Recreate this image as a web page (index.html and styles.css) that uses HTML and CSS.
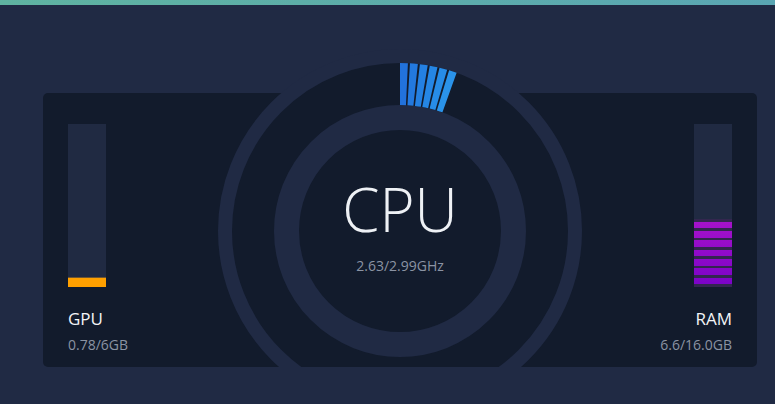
FILE: index.html
```html
<html>
  <head>
    <link rel="stylesheet" href="styles.css">
    <title>System Monitor</title>
  </head>
  <body>
    <div id="topBar"></div>
    <div id="panel">
      <div id="card">
        <div class="meter">
          <div class="meterBar">
            <div class="meterFill gpuFill" style="height: 9px"></div>
          </div>
          <div class="meterLabel">GPU</div>
          <div class="meterValue">0.78/6GB</div>
        </div>
        <div id="gaugeWrap">
          <div id="gauge">
            <svg id="ticks" width="364" height="364" viewBox="0 0 364 364">
              <path fill="#2272dc" d="M182 14 A168 168 0 0 1 189.91 14.19 L187.94 56.14 A126 126 0 0 0 182 56 Z"/>
              <path fill="#2379df" d="M191.96 14.3 A168 168 0 0 1 199.85 14.95 L195.39 56.71 A126 126 0 0 0 189.47 56.22 Z"/>
              <path fill="#2480e2" d="M201.89 15.18 A168 168 0 0 1 209.73 16.3 L202.8 57.73 A126 126 0 0 0 196.92 56.89 Z"/>
              <path fill="#2586e5" d="M211.75 16.65 A168 168 0 0 1 219.51 18.24 L210.13 59.18 A126 126 0 0 0 204.31 57.99 Z"/>
              <path fill="#278ce7" d="M221.5 18.71 A168 168 0 0 1 229.15 20.75 L217.36 61.06 A126 126 0 0 0 211.63 59.53 Z"/>
              <path fill="#2a93ea" d="M231.12 21.34 A168 168 0 0 1 238.63 23.83 L224.47 63.37 A126 126 0 0 0 218.84 61.51 Z"/>
            </svg>
            <div id="core">
              <div id="cpuTitle">CPU</div>
              <div id="cpuValue">2.63/2.99GHz</div>
            </div>
          </div>
        </div>
        <div class="meter right">
          <div class="meterBar">
            <div class="meterFill ramFill" style="height: 68px"></div>
          </div>
          <div class="meterLabel">RAM</div>
          <div class="meterValue">6.6/16.0GB</div>
        </div>
      </div>
    </div>
  </body>
</html>
```

FILE: styles.css
```css
* {
  margin: 0;
  padding: 0;
  box-sizing: border-box;
}
body {
  background: #202a44;
  font-family: "Open Sans", "Noto Sans", sans-serif;
  overflow: hidden;
}
#topBar {
  height: 5px;
  background: linear-gradient(to right, #5fb3a1, #5aa6b3);
}
#panel {
  height: 399px;
  background: #202a44;
  border-radius: 4px 0 0 0;
  padding: 88px 0 0 43px;
}
#card {
  width: 714px;
  height: 274px;
  background: #121b2c;
  border-radius: 5px;
  padding: 31px 25px 0 25px;
  display: flex;
  align-items: flex-start;
}
.meter {
  flex: 1;
  display: flex;
  flex-direction: column;
  align-items: flex-start;
}
.meter.right {
  align-items: flex-end;
}
.meterBar {
  width: 38px;
  height: 163px;
  background: #202a42;
  display: flex;
  flex-direction: column;
  justify-content: flex-end;
}
.gpuFill {
  background: #ffa000;
  box-shadow: 0 -1px 0 #6e5532;
}
.ramFill {
  background:
    repeating-linear-gradient(
      to bottom,
      #33264f 0,
      #33264f 2.7px,
      transparent 2.7px,
      transparent 9.33px
    ),
    linear-gradient(#a713cb, #7a02c7);
}
.meterLabel {
  margin-top: 21px;
  font-size: 17px;
  line-height: 22px;
  color: #f2f4f7;
}
.meterValue {
  margin-top: 5px;
  font-size: 14px;
  line-height: 20px;
  color: #8b93a3;
}
#gaugeWrap {
  flex: none;
  width: 364px;
  height: 318px;
  margin-top: -75px;
  overflow: hidden;
}
#gauge {
  position: relative;
  width: 364px;
  height: 364px;
  border-radius: 50%;
  background: #121b2c;
  border: 14px solid #202a44;
  display: flex;
  justify-content: center;
  align-items: center;
}
#ticks {
  position: absolute;
  top: -14px;
  left: -14px;
}
#core {
  width: 252px;
  height: 252px;
  border-radius: 50%;
  border: 25px solid #202a44;
  display: flex;
  flex-direction: column;
  align-items: center;
  padding-top: 49px;
}
#cpuTitle {
  font-size: 60px;
  line-height: 60px;
  font-weight: 300;
  color: #eef1f5;
}
#cpuValue {
  margin-top: 17px;
  font-size: 14px;
  line-height: 20px;
  color: #8b93a3;
}
```
